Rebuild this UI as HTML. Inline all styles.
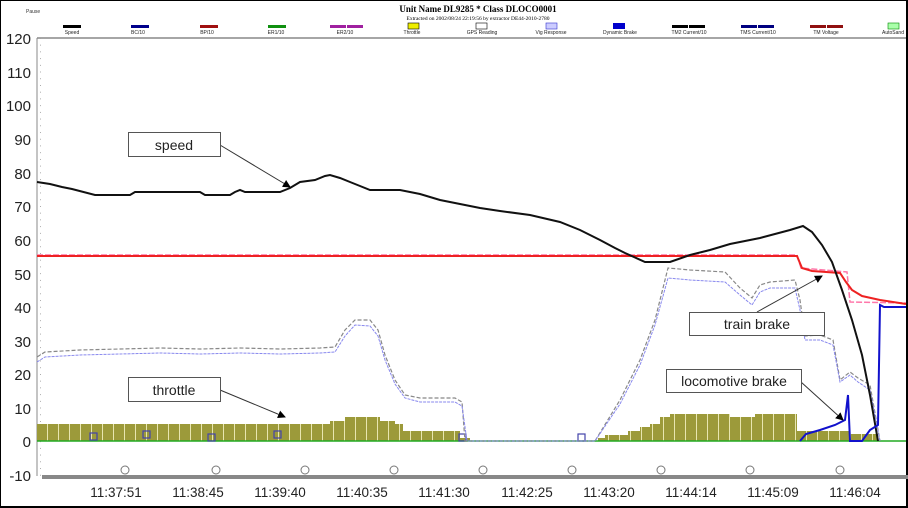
<!DOCTYPE html><html><head><meta charset="utf-8"><style>
html,body{margin:0;padding:0;background:#fff}
svg{display:block;font-family:"Liberation Sans",sans-serif}
</style></head><body>
<svg width="908" height="508" viewBox="0 0 908 508" xmlns="http://www.w3.org/2000/svg">
<defs>
<pattern id="st" width="11" height="50" patternUnits="userSpaceOnUse" x="37">
<rect width="11" height="50" fill="#9c9a3a"/><rect x="10" width="1" height="50" fill="#e8e6b0"/>
</pattern>
<pattern id="tk" width="8" height="6.72" patternUnits="userSpaceOnUse" y="38">
<rect x="0" y="0" width="3" height="0.8" fill="#999"/>
</pattern>
<marker id="ah" markerWidth="8" markerHeight="8" refX="7" refY="4" orient="auto"><path d="M0,0 L8,4 L0,8 z" fill="#000"/></marker>
</defs>
<rect x="0.5" y="0.5" width="907" height="507" fill="#fff" stroke="#000" stroke-width="1"/>
<rect x="906" y="0" width="2" height="508" fill="#000"/>
<rect x="0" y="506" width="908" height="2" fill="#000"/>
<text x="26" y="13" font-size="5" fill="#333">Pause</text>
<text x="478" y="12" font-size="9" font-weight="bold" font-family="Liberation Serif,serif" text-anchor="middle">Unit Name DL9285  * Class  DLOCO0001</text>
<text x="478" y="20" font-size="5.5" font-family="Liberation Serif,serif" text-anchor="middle">Extracted on 2002/08/24 22:19:56  by extractor DE44-2010-2780</text>
<g font-size="5" text-anchor="middle" fill="#222">
<rect x="63" y="25" width="18" height="3" fill="#000"/><text x="72" y="34">Speed</text>
<rect x="131" y="25" width="18" height="3" fill="#00008b"/><text x="138" y="34">BC/10</text>
<rect x="200" y="25" width="18" height="3" fill="#a01010"/><text x="207" y="34">BP/10</text>
<rect x="268" y="25" width="18" height="3" fill="#109010"/><text x="276" y="34">ER1/10</text>
<rect x="330" y="25" width="16" height="3" fill="#a020a0"/><rect x="347" y="25" width="16" height="3" fill="#a020a0"/><text x="345" y="34">ER2/10</text>
<rect x="408" y="23" width="11" height="6" fill="#ee0" stroke="#000" stroke-width="0.6"/><text x="412" y="34">Throttle</text>
<rect x="476" y="23" width="11" height="6" fill="#fff" stroke="#000" stroke-width="0.6"/><text x="482" y="34">GPS Reading</text>
<rect x="546" y="23" width="11" height="6" fill="#ccf" stroke="#33c" stroke-width="0.6"/><text x="551" y="34">Vig Response</text>
<rect x="613" y="23" width="12" height="6" fill="#0000cc"/><text x="620" y="34">Dynamic Brake</text>
<rect x="672" y="25" width="16" height="3" fill="#000"/><rect x="689" y="25" width="16" height="3" fill="#000"/><text x="689" y="34">TM2 Current/10</text>
<rect x="741" y="25" width="16" height="3" fill="#000080"/><rect x="758" y="25" width="16" height="3" fill="#000080"/><text x="758" y="34">TMS Current/10</text>
<rect x="810" y="25" width="16" height="3" fill="#901010"/><rect x="827" y="25" width="16" height="3" fill="#901010"/><text x="826" y="34">TM Voltage</text>
<rect x="888" y="23" width="11" height="6" fill="#afa" stroke="#080" stroke-width="0.6"/><text x="893" y="34">AutoSand</text>
</g>
<line x1="37" y1="38" x2="906" y2="38" stroke="#888" stroke-width="1.5"/>
<line x1="37" y1="38" x2="37" y2="476" stroke="#888" stroke-width="1"/>
<rect x="37" y="38" width="4" height="438" fill="url(#tk)"/>
<g font-size="15" text-anchor="end" fill="#222">
<text x="31" y="44">120</text><text x="31" y="78">110</text><text x="31" y="111">100</text><text x="31" y="145">90</text><text x="31" y="179">80</text><text x="31" y="212">70</text><text x="31" y="246">60</text><text x="31" y="280">50</text><text x="31" y="313">40</text><text x="31" y="347">30</text><text x="31" y="380">20</text><text x="31" y="414">10</text><text x="31" y="447">0</text><text x="31" y="481">-10</text>
</g>
<path d="M37,441 V424 H330 V421 H345 V417 H380 V421 H395 V424 H403 V431 H460 V438 H470 V441 Z" fill="url(#st)"/>
<path d="M598,441 V438 H605 V435 H628 V431 H640 V427 H650 V424 H660 V417 H670 V414 H730 V417 H755 V414 H797 V431 H850 V434 H878 V441 Z" fill="url(#st)"/>
<line x1="37" y1="441" x2="906" y2="441" stroke="#2a2" stroke-width="1.5"/>
<g fill="none" stroke="#44a" stroke-width="1.2">
<rect x="90" y="433" width="7" height="7"/><rect x="143" y="431" width="7" height="7"/><rect x="208" y="434" width="7" height="7"/><rect x="274" y="431" width="7" height="7"/><rect x="459" y="434" width="7" height="7"/><rect x="578" y="434" width="7" height="7"/>
</g>
<path d="M37,357 L45,352 L80,350 L120,349 L160,348 L200,349 L240,348 L280,349 L320,348 L335,347 L345,330 L355,320 L370,320 L378,330 L385,355 L395,380 L405,395 L420,398 L455,398 L462,402 L465,441 L595,441 L620,400 L640,360 L655,320 L668,268 L690,270 L725,272 L740,288 L752,298 L760,285 L770,282 L795,280 L800,300 L805,336 L820,335 L833,340 L840,380 L850,372 L858,378 L870,385 L880,441" fill="none" stroke="#888" stroke-width="1.2" stroke-dasharray="4,2"/>
<path d="M37,362 L45,357 L80,355 L120,354 L160,353 L200,354 L240,353 L280,354 L320,353 L335,352 L345,336 L355,325 L370,326 L378,336 L385,360 L395,384 L405,398 L420,402 L455,402 L462,406 L467,441 L595,441 L620,404 L640,365 L655,325 L668,278 L690,280 L725,282 L740,295 L752,305 L760,292 L770,288 L795,288 L800,310 L805,340 L820,340 L833,345 L840,382 L850,375 L858,382 L870,390 L880,441" fill="none" stroke="#88e" stroke-width="1" stroke-dasharray="3,1"/>
<path d="M37,255 L797,255 L801,268 L847,272 L850,302 L906,303" fill="none" stroke="#f7a" stroke-width="1.5" stroke-dasharray="6,2"/>
<path d="M37,256 L797,256 L802,268 L812,271 L840,273 L846,282 L852,290 L862,296 L880,300 L906,304" fill="none" stroke="#e22" stroke-width="2"/>
<path d="M37,182 L50,184 L62,187 L72,189 L95,195 L130,195 L135,192 L200,192 L205,195 L230,195 L235,192 L240,190 L245,192 L280,192 L290,188 L300,182 L315,180 L325,176 L330,175 L340,178 L350,182 L360,186 L370,190 L400,190 L420,194 L440,200 L460,204 L480,208 L500,211 L530,215 L560,222 L580,230 L600,240 L615,248 L625,253 L645,262 L670,262 L690,255 L710,250 L730,244 L760,238 L790,230 L803,226 L812,232 L822,245 L832,262 L842,290 L852,320 L862,355 L870,395 L878,441" fill="none" stroke="#111" stroke-width="2"/>
<path d="M800,441 L806,434 L820,430 L835,425 L845,420 L848,395 L850,441 L862,441 L870,430 L878,425 L880,305 L884,307 L906,307" fill="none" stroke="#11c" stroke-width="2"/>
<rect x="42" y="475" width="866" height="4" fill="#888"/>
<g fill="#fff" stroke="#777" stroke-width="1">
<circle cx="125" cy="470" r="4"/><circle cx="216" cy="470" r="4"/><circle cx="305" cy="470" r="4"/><circle cx="394" cy="470" r="4"/><circle cx="483" cy="470" r="4"/><circle cx="572" cy="470" r="4"/><circle cx="661" cy="470" r="4"/><circle cx="750" cy="470" r="4"/><circle cx="840" cy="470" r="4"/>
</g>
<g font-size="13.5" text-anchor="middle" fill="#222">
<text x="116" y="497">11:37:51</text><text x="198" y="497">11:38:45</text><text x="280" y="497">11:39:40</text><text x="362" y="497">11:40:35</text><text x="444" y="497">11:41:30</text><text x="527" y="497">11:42:25</text><text x="609" y="497">11:43:20</text><text x="691" y="497">11:44:14</text><text x="773" y="497">11:45:09</text><text x="855" y="497">11:46:04</text>
</g>
<g stroke="#333" stroke-width="1">
<line x1="220" y1="145" x2="290" y2="187" marker-end="url(#ah)"/>
<line x1="220" y1="390" x2="285" y2="417" marker-end="url(#ah)"/>
<line x1="757" y1="312" x2="822" y2="276" marker-end="url(#ah)"/>
<line x1="801" y1="382" x2="843" y2="420" marker-end="url(#ah)"/>
</g>
<g fill="#fff" stroke="#555" stroke-width="1">
<rect x="128.5" y="132.5" width="92" height="24"/>
<rect x="128.5" y="377.5" width="92" height="24"/>
<rect x="689.5" y="312.5" width="135" height="23"/>
<rect x="666.5" y="369.5" width="135" height="23"/>
</g>
<g font-size="14" text-anchor="middle" fill="#222">
<text x="174" y="150">speed</text><text x="174" y="395">throttle</text><text x="757" y="329">train brake</text><text x="734" y="386">locomotive brake</text>
</g>
</svg>
</body></html>
